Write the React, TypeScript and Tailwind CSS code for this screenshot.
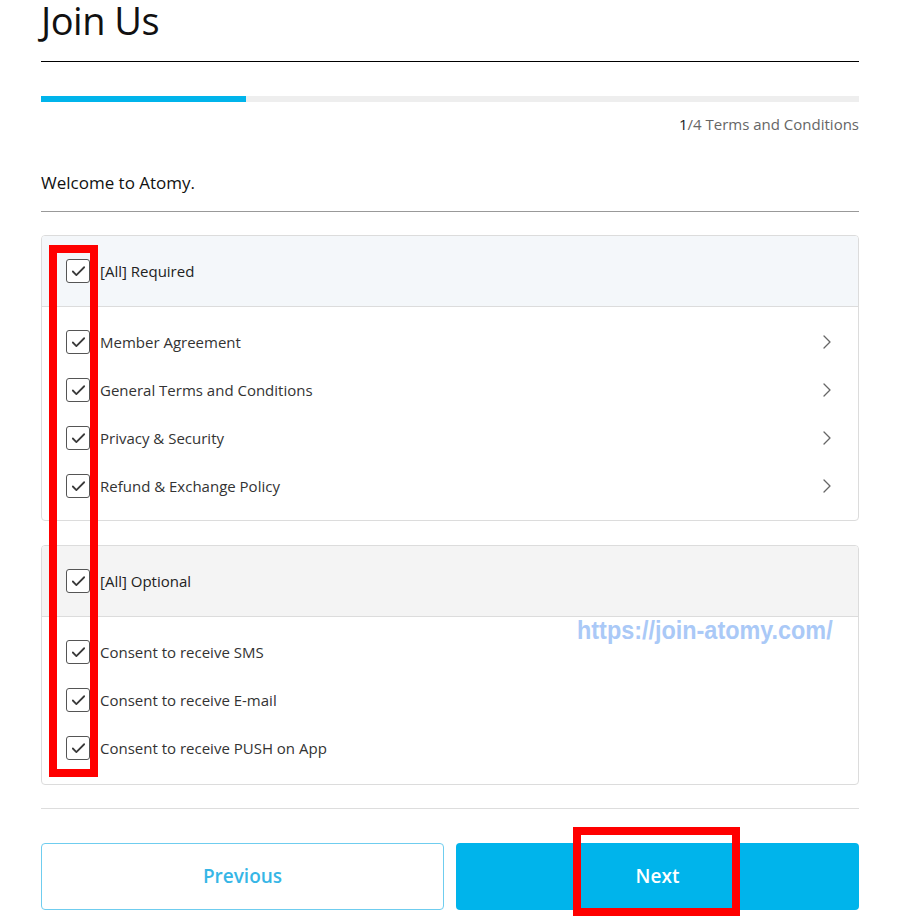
import { Check, ChevronRight } from 'lucide-react';

const required = [
  'Member Agreement',
  'General Terms and Conditions',
  'Privacy & Security',
  'Refund & Exchange Policy',
];

const optional = [
  'Consent to receive SMS',
  'Consent to receive E-mail',
  'Consent to receive PUSH on App',
];

function Box() {
  return (
    <span className="flex h-[24px] w-[24px] shrink-0 items-center justify-center rounded-[3px] border border-[#555] bg-white">
      <Check size={17} strokeWidth={2.5} className="text-[#3a3a3a]" />
    </span>
  );
}

function TermsGroup({ title, items, headBg, arrows, listPad }: { title: string; items: string[]; headBg: string; arrows: boolean; listPad: string }) {
  return (
    <div className="overflow-hidden rounded-[4px] border border-[#dcdcdc]">
      <div className={`flex h-[71px] items-center gap-[10px] border-b border-[#dcdcdc] pl-[24px] ${headBg}`}>
        <Box />
        <span className="text-[15px] font-medium text-[#222]">{title}</span>
      </div>
      <ul className={listPad}>
        {items.map((item) => (
          <li key={item} className="flex h-[48px] items-center gap-[10px] pl-[24px] pr-[19px]">
            <Box />
            <span className="flex-1 text-[15px] text-[#333]">{item}</span>
            {arrows && <ChevronRight size={24} strokeWidth={1.3} className="text-[#666]" />}
          </li>
        ))}
      </ul>
    </div>
  );
}

export default function App() {
  return (
    <div className="relative min-h-[921px] bg-white px-[41px] font-['Open_Sans',sans-serif] text-[#222]">
      <div className="border-b border-black pb-[21px]">
        <h1 className="text-[38px] leading-[40px] font-medium tracking-[-0.5px] text-[#111]">Join Us</h1>
      </div>

      <div className="mt-[34px] h-[6px] bg-[#eeeeee]">
        <div className="h-full w-1/4 bg-[#00b4eb]" />
      </div>

      <p className="mt-[12px] text-right text-[15px] leading-[20px] text-[#666]">
        <span className="text-[#222]">1</span>/4 Terms and Conditions
      </p>

      <div className="mt-[38px] border-b border-[#999] pb-[17px]">
        <p className="text-[17px] leading-[22px] font-medium text-[#111]">Welcome to Atomy.</p>
      </div>

      <div className="mt-[23px] flex flex-col gap-[24px]">
        <TermsGroup title="[All] Required" items={required} headBg="bg-[#f4f7fa]" arrows listPad="pt-[11px] pb-[10px]" />
        <TermsGroup title="[All] Optional" items={optional} headBg="bg-[#f4f4f4]" arrows={false} listPad="pt-[11px] pb-[12px]" />
      </div>

      <div className="mt-[23px] border-t border-[#dddddd]" />

      <div className="mt-[34px] grid grid-cols-2 gap-[12px]">
        <button className="h-[67px] rounded-[4px] border border-[#6fcdef] bg-white text-[19px] font-semibold text-[#36b6e6]">
          Previous
        </button>
        <button className="h-[67px] rounded-[4px] bg-[#00b4eb] text-[19px] font-semibold text-white">Next</button>
      </div>

      <span className="absolute left-[577px] top-[615px] inline-block origin-left scale-x-[0.9] font-['Liberation_Sans',sans-serif] text-[26px] leading-[30px] font-bold text-[#aac9f7]">
        https://join-atomy.com/
      </span>

      <div className="pointer-events-none absolute left-[49px] top-[245px] h-[532px] w-[49px] border-[8px] border-[#ff0000]" />
      <div className="pointer-events-none absolute left-[573px] top-[827px] h-[89px] w-[167px] border-[8px] border-[#ff0000]" />
    </div>
  );
}
